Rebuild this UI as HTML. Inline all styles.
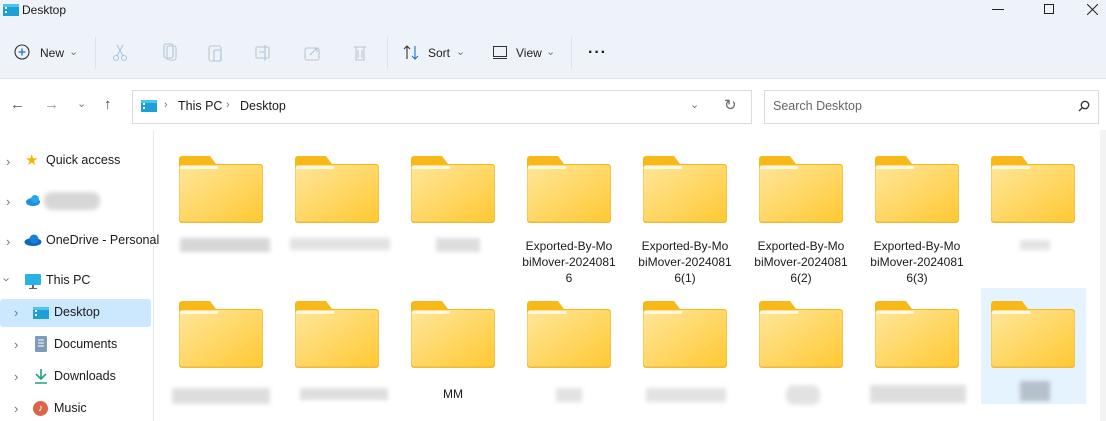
<!DOCTYPE html>
<html><head><style>
*{margin:0;padding:0;box-sizing:border-box}
body{width:1106px;height:421px;overflow:hidden;background:#fff;font-family:"Segoe UI","Liberation Sans",sans-serif;font-size:12px;color:#1a1a1a;position:relative}
.abs{position:absolute}
.hdr{left:0;top:0;width:1106px;height:79px;background:#eef3f9;border-bottom:1px solid #e0e3e8}
.tb{font-size:12px;color:#222}
.sep{width:1px;height:32px;background:#dfe2e6;top:37px}
.box{border:1px solid #d9dcdf;background:#fff}
.nav{font-size:12.5px;color:#1a1a1a}
.chev{color:#777;font-size:11px}
.blur{background:#d0d0d0;filter:blur(2px);opacity:.85}
.lbl{width:104px;text-align:center;font-size:12px;line-height:16px}
</style></head><body>
<div class="abs hdr"></div>
<svg class="abs" style="left:3px;top:3px" width="16" height="14"><rect x="0" y="1" width="16" height="12" fill="#1f9fd8"/><rect x="0" y="1" width="16" height="3" fill="#4fc3f0"/><rect x="2" y="4" width="2" height="2" fill="#fff"/><rect x="2" y="8" width="2" height="2" fill="#fff"/></svg>
<div class="abs" style="left:22px;top:3px;font-size:12px">Desktop</div>
<div class="abs" style="left:992px;top:9px;width:12px;height:1px;background:#222"></div>
<div class="abs" style="left:1044px;top:4px;width:10px;height:10px;border:1px solid #222"></div>
<svg class="abs" style="left:1087px;top:4px" width="11" height="11"><path d="M0 0L11 11M11 0L0 11" stroke="#222" stroke-width="1"/></svg>
<svg class="abs" style="left:14px;top:44px" width="16" height="16"><circle cx="8" cy="8" r="7" fill="none" stroke="#333" stroke-width="1.1"/><path d="M8 4.5v7M4.5 8h7" stroke="#1a6fd1" stroke-width="1.3"/></svg>
<div class="abs tb" style="left:40px;top:46px">New</div><div class="abs chev" style="left:69px;top:45px">⌄</div>
<div class="abs sep" style="left:95px"></div>
<svg class="abs" style="left:112px;top:43px" width="270" height="20" fill="none" stroke="#a9c4dc" stroke-width="1.1">
<circle cx="4" cy="15" r="2.5"/><circle cx="12" cy="15" r="2.5"/><path d="M5 13L11 2M11 13L5 2"/>
<rect x="52" y="1" width="9" height="14" rx="2"/><rect x="55" y="3" width="9" height="14" rx="2" stroke="#c0c6cc"/>
<rect x="97" y="3" width="12" height="15" rx="2" stroke="#c0c6cc"/><rect x="102" y="7" width="7" height="11" rx="1"/>
<rect x="144" y="4" width="13" height="11" rx="1" stroke="#c0c6cc"/><path d="M147 9h5M153 2v16"/>
<rect x="193" y="5" width="14" height="12" rx="2" stroke="#c0c6cc"/><path d="M198 12l7-7M201 5h4v4"/>
<path d="M242 4h12M244 4v13h8V4M246 7v8M250 7v8" stroke="#c0c6cc"/>
</svg>
<div class="abs sep" style="left:387px"></div>
<svg class="abs" style="left:403px;top:44px" width="17" height="17" fill="none" stroke-width="1.1"><path d="M4 15V2M1 5l3-3 3 3" stroke="#333"/><path d="M12 2v13M9 12l3 3 3-3" stroke="#1a6fd1"/></svg>
<div class="abs tb" style="left:428px;top:46px">Sort</div><div class="abs chev" style="left:456px;top:45px">⌄</div>
<svg class="abs" style="left:493px;top:46px" width="15" height="13"><rect x=".5" y=".5" width="13" height="10" fill="none" stroke="#333"/><path d="M0 12.5h14" stroke="#333"/></svg>
<div class="abs tb" style="left:516px;top:46px">View</div><div class="abs chev" style="left:546px;top:45px">⌄</div>
<div class="abs sep" style="left:571px"></div>
<div class="abs" style="left:588px;top:44px;font-size:16px;font-weight:bold;letter-spacing:1px">···</div>
<div class="abs nav" style="left:10px;top:96px;font-size:15px;color:#555">←</div>
<div class="abs nav" style="left:44px;top:96px;font-size:15px;color:#999">→</div>
<div class="abs chev" style="left:77px;top:97px">⌄</div>
<div class="abs nav" style="left:104px;top:96px;font-size:15px;color:#444">↑</div>
<div class="abs box" style="left:132px;top:90px;width:620px;height:34px"></div>
<svg class="abs" style="left:141px;top:99px" width="16" height="14"><rect x="0" y="1" width="16" height="12" fill="#1f9fd8"/><rect x="0" y="1" width="16" height="3" fill="#4fc3f0"/><rect x="2" y="4" width="2" height="2" fill="#fff"/><rect x="2" y="8" width="2" height="2" fill="#fff"/></svg>
<div class="abs chev" style="left:164px;top:99px">›</div>
<div class="abs nav" style="left:178px;top:99px">This PC</div>
<div class="abs chev" style="left:226px;top:99px">›</div>
<div class="abs nav" style="left:240px;top:99px">Desktop</div>
<div class="abs chev" style="left:690px;top:98px">⌄</div>
<div class="abs" style="left:724px;top:96px;font-size:15px;color:#666">↻</div>
<div class="abs box" style="left:764px;top:90px;width:335px;height:34px"></div>
<div class="abs" style="left:773px;top:99px;color:#666;font-size:12.5px">Search Desktop</div>
<svg class="abs" style="left:1078px;top:100px" width="12" height="12" fill="none" stroke="#333" stroke-width="1.3"><circle cx="7" cy="5" r="3.7"/><path d="M4.3 7.7L1 11"/></svg>
<div class="abs" style="left:153px;top:130px;width:1px;height:291px;background:#e8e8e8"></div>
<div class="abs" style="left:0;top:299px;width:151px;height:28px;background:#cce8ff;border-radius:3px"></div>
<div class="abs chev" style="left:6px;top:154px;font-size:13px">›</div>
<div class="abs" style="left:25px;top:151px;color:#f4b400;font-size:15px">★</div>
<div class="abs nav" style="left:46px;top:153px">Quick access</div>
<div class="abs chev" style="left:6px;top:194px;font-size:13px">›</div>
<svg class="abs" style="left:25px;top:194px" width="18" height="12"><ellipse cx="8" cy="8" rx="7" ry="4" fill="#1e8fe0"/><circle cx="10" cy="5" r="4" fill="#2aa6ef"/></svg>
<div class="abs blur" style="left:44px;top:192px;width:56px;height:18px;border-radius:8px"></div>
<div class="abs chev" style="left:6px;top:234px;font-size:13px">›</div>
<svg class="abs" style="left:24px;top:234px" width="18" height="12"><ellipse cx="9" cy="8" rx="8.5" ry="4" fill="#0e67c0"/><circle cx="10" cy="5" r="4.5" fill="#1b7fd6"/></svg>
<div class="abs nav" style="left:46px;top:233px">OneDrive - Personal</div>
<div class="abs chev" style="left:5px;top:272px;font-size:13px;transform:rotate(90deg)">›</div>
<svg class="abs" style="left:25px;top:274px" width="16" height="15"><rect x="0" y="0" width="16" height="11" rx="1" fill="#2ab2e4"/><rect x="7" y="11" width="2" height="3" fill="#666"/><rect x="4" y="14" width="8" height="1" fill="#666"/></svg>
<div class="abs nav" style="left:46px;top:273px">This PC</div>
<div class="abs chev" style="left:14px;top:305px;font-size:13px">›</div>
<svg class="abs" style="left:33px;top:306px" width="16" height="14"><rect x="0" y="1" width="16" height="12" fill="#1f9fd8"/><rect x="0" y="1" width="16" height="3" fill="#4fc3f0"/><rect x="2" y="4" width="2" height="2" fill="#fff"/><rect x="2" y="8" width="2" height="2" fill="#fff"/></svg>
<div class="abs nav" style="left:54px;top:305px">Desktop</div>
<div class="abs chev" style="left:14px;top:337px;font-size:13px">›</div>
<svg class="abs" style="left:35px;top:336px" width="12" height="16"><rect width="12" height="16" rx="1" fill="#7f9bb8"/><path d="M3 4h6M3 7h6M3 10h6" stroke="#fff"/></svg>
<div class="abs nav" style="left:54px;top:337px">Documents</div>
<div class="abs chev" style="left:14px;top:369px;font-size:13px">›</div>
<svg class="abs" style="left:34px;top:368px" width="14" height="16" fill="none" stroke="#1aa37a" stroke-width="1.6"><path d="M7 1v10M2 6l5 5 5-5M1 15h12"/></svg>
<div class="abs nav" style="left:54px;top:369px">Downloads</div>
<div class="abs chev" style="left:14px;top:401px;font-size:13px">›</div>
<div class="abs" style="left:33px;top:401px;width:15px;height:15px;border-radius:50%;background:#d9664a;color:#fff;font-size:10px;text-align:center;line-height:15px">♪</div>
<div class="abs nav" style="left:54px;top:401px">Music</div>
<div class="abs" style="left:981px;top:288px;width:105px;height:116px;background:#e5f3ff"></div>
<div class="abs" style="left:1100px;top:130px;width:6px;height:291px;background:#f3f3f3"></div>
<svg width="0" height="0" style="position:absolute"><defs>
<linearGradient id="g" x1="0" y1="0" x2="1" y2="1"><stop offset="0" stop-color="#ffe69a"/><stop offset="1" stop-color="#ffc933"/></linearGradient>
<symbol id="f" viewBox="0 0 84 68"><path d="M0 4a3 3 0 0 1 3-3h28l6 8h44a3 3 0 0 1 3 3v20H0z" fill="#f8b818"/><rect x="0" y="10" width="84" height="58" rx="3" fill="#f0b93a"/><rect x="0.5" y="10" width="83" height="56.5" rx="3" fill="url(#g)"/><rect x="1" y="11" width="38" height="3" rx="1" fill="#fff7e0"/></symbol>
</defs></svg>
<div id="grid"></div>
<script>
var xs=[179,295,411,527,643,759,875,991],h='';
xs.forEach(function(x){h+='<svg class="abs" style="left:'+x+'px;top:155px" width="84" height="68"><use href="#f"/></svg>';h+='<svg class="abs" style="left:'+x+'px;top:300px" width="84" height="68"><use href="#f"/></svg>';});
document.getElementById('grid').innerHTML=h;
</script>
<div class="abs blur" style="left:180px;top:238px;width:90px;height:14px"></div>
<div class="abs blur" style="left:290px;top:238px;width:100px;height:12px;opacity:.6"></div>
<div class="abs blur" style="left:436px;top:238px;width:44px;height:14px;opacity:.7"></div>
<div class="abs lbl" style="left:517px;top:238px">Exported-By-Mo<br>biMover-2024081<br>6</div>
<div class="abs lbl" style="left:633px;top:238px">Exported-By-Mo<br>biMover-2024081<br>6(1)</div>
<div class="abs lbl" style="left:749px;top:238px">Exported-By-Mo<br>biMover-2024081<br>6(2)</div>
<div class="abs lbl" style="left:865px;top:238px">Exported-By-Mo<br>biMover-2024081<br>6(3)</div>
<div class="abs blur" style="left:1020px;top:240px;width:30px;height:10px;opacity:.6"></div>
<div class="abs blur" style="left:172px;top:388px;width:98px;height:16px;opacity:.7"></div>
<div class="abs blur" style="left:300px;top:388px;width:88px;height:12px;opacity:.7"></div>
<div class="abs lbl" style="left:401px;top:386px">MM</div>
<div class="abs blur" style="left:556px;top:388px;width:26px;height:14px;opacity:.6"></div>
<div class="abs blur" style="left:646px;top:388px;width:80px;height:14px;opacity:.6"></div>
<div class="abs blur" style="left:786px;top:385px;width:34px;height:20px;opacity:.6;border-radius:8px"></div>
<div class="abs blur" style="left:870px;top:385px;width:96px;height:18px;opacity:.7"></div>
<div class="abs blur" style="left:1020px;top:381px;width:30px;height:20px;background:#aab4bd;opacity:.8"></div>
</body></html>
